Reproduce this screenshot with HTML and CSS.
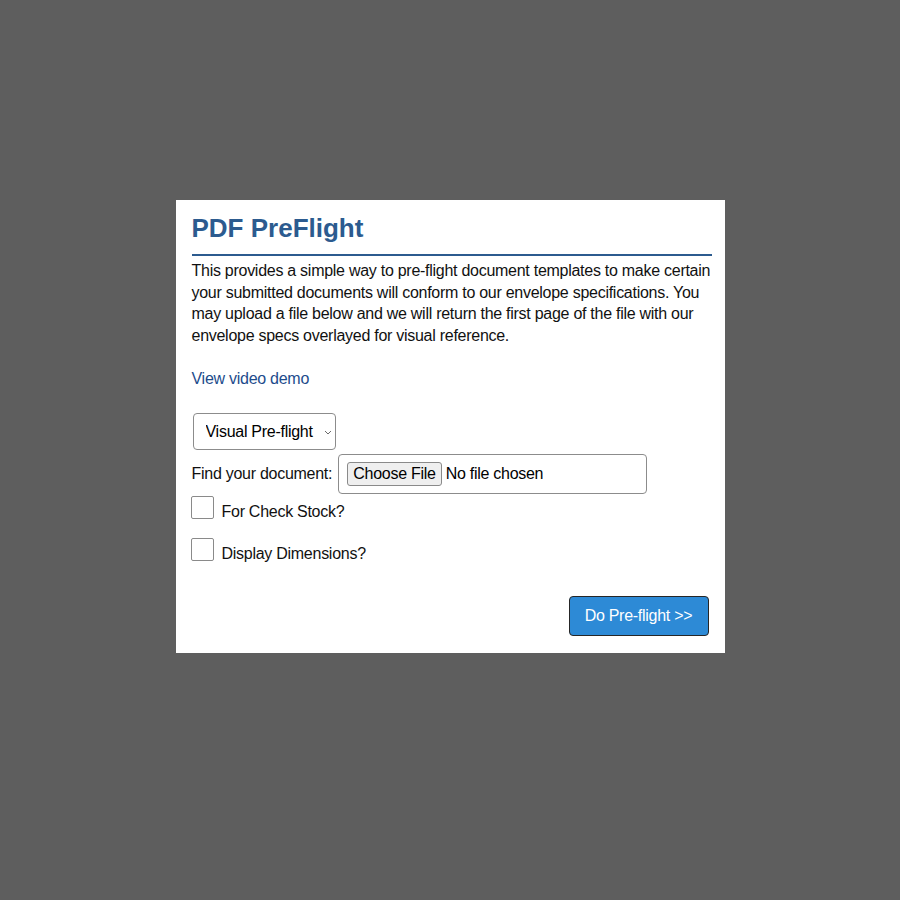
FILE: index.html
```html
<!DOCTYPE html>
<html lang="en">
<head>
<meta charset="utf-8">
<title>PDF PreFlight</title>
<link rel="stylesheet" href="styles.css">
</head>
<body>
  <div class="dialog">
    <h1 class="title">PDF PreFlight</h1>
    <p class="intro">This provides a simple way to pre-flight document templates to make certain your submitted documents will conform to our envelope specifications. You may upload a file below and we will return the first page of the file with our envelope specs overlayed for visual reference.</p>
    <a class="demo-link" href="#">View video demo</a>

    <form class="preflight-form">
      <div class="select-wrap">
        <select class="mode-select">
          <option>Visual Pre-flight</option>
        </select>
        <svg class="select-arrow" width="8" height="5" viewBox="0 0 8 5" aria-hidden="true">
          <path d="M1 1 L4 4 L7 1" fill="none" stroke="#6b6b6b" stroke-width="1"/>
        </svg>
      </div>

      <div class="file-row">
        <label class="file-label" for="doc">Find your document:</label>
        <div class="file-box">
          <input class="file-input" id="doc" type="file">
        </div>
      </div>

      <label class="check-row">
        <input class="check" type="checkbox">
        <span class="check-text">For Check Stock?</span>
      </label>
      <label class="check-row second">
        <input class="check" type="checkbox">
        <span class="check-text">Display Dimensions?</span>
      </label>

      <div class="actions">
        <button class="submit" type="button">Do Pre-flight &gt;&gt;</button>
      </div>
    </form>
  </div>
</body>
</html>
```

FILE: styles.css
```css
html, body {
  margin: 0;
  padding: 0;
}

body {
  background: #5e5e5e;
  font-family: "Liberation Sans", Arial, sans-serif;
  font-size: 16px;
  letter-spacing: -0.27px;
  color: #111;
  min-height: 900px;
}

.dialog {
  box-sizing: border-box;
  width: 549px;
  margin: 200px auto 0;
  background: #fff;
  padding: 0 13px 17px 16px;
}

.title {
  margin: 0;
  padding: 13px 0 11px;
  font-size: 26px;
  line-height: 30px;
  font-weight: bold;
  letter-spacing: 0;
  color: #2c5b8f;
  border-bottom: 2px solid #2c5b8f;
}

.intro {
  margin: 4px 0 22px;
  line-height: 21.6px;
}

.demo-link {
  display: block;
  line-height: 21.6px;
  color: #1d4c8c;
  text-decoration: none;
}

.preflight-form {
  margin-top: 23px;
}

.select-wrap {
  position: relative;
  width: 143px;
  height: 37px;
  margin-left: 1px;
}

.mode-select {
  appearance: none;
  -webkit-appearance: none;
  box-sizing: border-box;
  width: 143px;
  height: 37px;
  margin: 0;
  padding: 0 0 0 12px;
  font-family: inherit;
  font-size: 16px;
  letter-spacing: inherit;
  color: #000;
  background: #fff;
  border: 1px solid #8c8c8c;
  border-radius: 4px;
}

.select-arrow {
  position: absolute;
  right: 4px;
  top: 17px;
  pointer-events: none;
}

.file-row {
  display: flex;
  align-items: center;
  gap: 6px;
  margin-top: 4px;
}

.file-label {
  line-height: 21.6px;
}

.file-box {
  box-sizing: border-box;
  display: flex;
  align-items: center;
  width: 309px;
  height: 40px;
  padding: 0 8px;
  border: 1px solid #8c8c8c;
  border-radius: 4px;
}

.file-input {
  font-family: inherit;
  font-size: 16px;
  letter-spacing: inherit;
  color: #000;
  width: 290px;
}

.file-input::file-selector-button {
  font-family: inherit;
  font-size: 16px;
  letter-spacing: inherit;
  color: #000;
  height: 24px;
  padding: 0 5px;
  margin-right: 4px;
  background: #efefef;
  border: 1px solid #8a8a8a;
  border-radius: 3px;
}

.check-row {
  display: flex;
  align-items: flex-start;
  margin-top: 2px;
}

.check-row.second {
  margin-top: 15.4px;
}

.check {
  appearance: none;
  -webkit-appearance: none;
  box-sizing: border-box;
  width: 23px;
  height: 23px;
  margin: 0 0 0 -1px;
  background: #fff;
  border: 1px solid #8a8a8a;
  border-radius: 2px;
}

.check-text {
  margin: 5px 0 0 8px;
  line-height: 21.6px;
}

.actions {
  display: flex;
  justify-content: flex-end;
  margin-top: 31px;
  padding-right: 3px;
}

.submit {
  box-sizing: border-box;
  width: 140px;
  height: 40px;
  padding: 0;
  font-family: inherit;
  font-size: 16px;
  letter-spacing: inherit;
  color: #fff;
  background: #2d8ad6;
  border: 1px solid #262626;
  border-radius: 4px;
}
```
